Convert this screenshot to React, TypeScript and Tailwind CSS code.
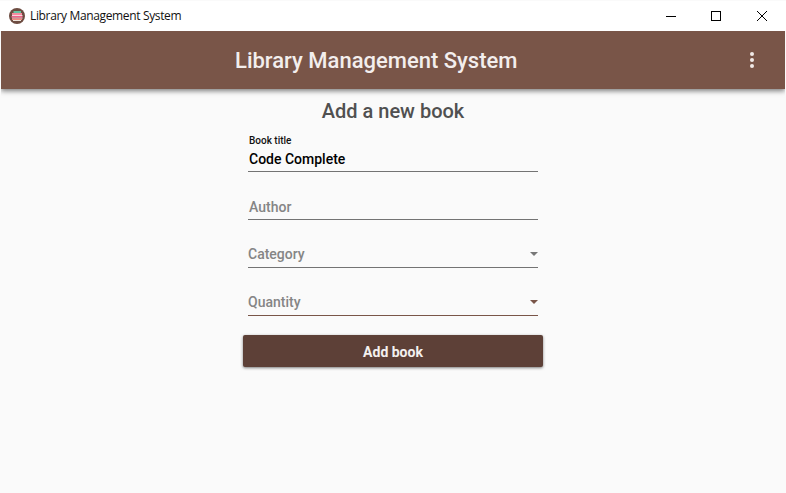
const fields = [
  { label: 'Author', offset: 'pl-px', line: 'border-[#737373]', arrow: '' },
  { label: 'Category', offset: 'pb-px', line: 'border-[#737373]', arrow: 'text-[#777777]' },
  { label: 'Quantity', offset: 'pb-px', line: 'border-[#795548]', arrow: 'text-[#795548]' },
];

function LibraryLogo() {
  return (
    <svg className="h-4 w-4" viewBox="0 0 16 16">
      <circle cx="8" cy="8" r="8" fill="#6d4c41" />
      <path d="M4.5 3h7.5v2H4.5z" fill="#66c2a0" />
      <path d="M3 5h10v2H3z" fill="#f58ca0" />
      <path d="M3 7h10.5v1H3z" fill="#f8d5dc" />
      <path d="M2.5 8h11v1.6h-11z" fill="#f0628a" />
      <path d="M3 9.6h10.5v1H3z" fill="#f8d5dc" />
      <path d="M3 10.6h10v1.4H3z" fill="#f48a80" />
      <path d="M4 12h8v1H4z" fill="#efe6dc" />
    </svg>
  );
}

function TitleBar() {
  return (
    <header className="flex h-[31px] shrink-0 items-center justify-between border-t border-[#fafafa] bg-white pl-[9px]">
      <div className="flex items-center gap-[5px]">
        <LibraryLogo />
        <span className="whitespace-nowrap font-['Open_Sans','Noto_Sans',sans-serif] text-[12px] tracking-[-0.35px] text-[#111]">Library Management System</span>
      </div>
      <svg width="120" height="11" viewBox="0 0 120 11" fill="none" stroke="#000" shapeRendering="crispEdges">
        <path d="M0 5.5h10" />
        <rect x="45.5" y="0.5" width="9" height="9" />
        <path d="M91 0l10 10M101 0l-10 10" shapeRendering="auto" />
      </svg>
    </header>
  );
}

export default function App() {
  return (
    <div className="flex h-[493px] w-[786px] flex-col overflow-hidden bg-[#fafafa] font-[Roboto,sans-serif]">
      <TitleBar />
      <div className="mx-px flex h-[58px] shrink-0 items-center bg-[#795548] shadow-[0_2px_5px_rgba(0,0,0,0.5)] [clip-path:inset(0_0_-12px_0)]">
        <h1 className="ml-[234px] w-[290px] whitespace-nowrap text-[22px] font-medium text-[#f3eeed]">Library Management System</h1>
        <svg className="ml-[219px]" width="16" height="18" viewBox="0 0 16 18" fill="#f0e9e7">
          <circle cx="8" cy="3" r="2" /><circle cx="8" cy="9" r="2" /><circle cx="8" cy="15" r="2" />
        </svg>
      </div>
      <main className="mx-auto flex w-[300px] flex-col items-center">
        <h2 className="mt-2 text-[20px] font-medium leading-7 text-[#505050]">Add a new book</h2>
        <div className="mt-[10px] h-[37px] w-[290px] border-b border-[#737373] pl-px">
          <div className="text-[10px] font-medium leading-3 text-[#111]">Book title</div>
          <div className="mt-[2px] text-[14px] font-medium leading-5 text-black">Code Complete</div>
        </div>
        {fields.map(({ label, offset, line, arrow }) => (
          <div key={label} className={`${line} flex h-12 w-[290px] items-end justify-between border-b pb-px text-[14px] font-medium text-[#858585]`}>
            <span className={offset}>{label}</span>
            {arrow && <svg className={`${arrow} mb-[10px]`} width="8" height="4" viewBox="0 0 8 4"><path d="M0 0h8L4 4z" fill="currentColor" /></svg>}
          </div>
        ))}
        <button className="mt-[19px] h-8 w-[300px] rounded-[2px] bg-[#5d4037] pt-[2px] text-[14px] font-bold text-[#f3f0ef] shadow-[0_1px_3px_rgba(0,0,0,0.5)]">Add book</button>
      </main>
    </div>
  );
}
